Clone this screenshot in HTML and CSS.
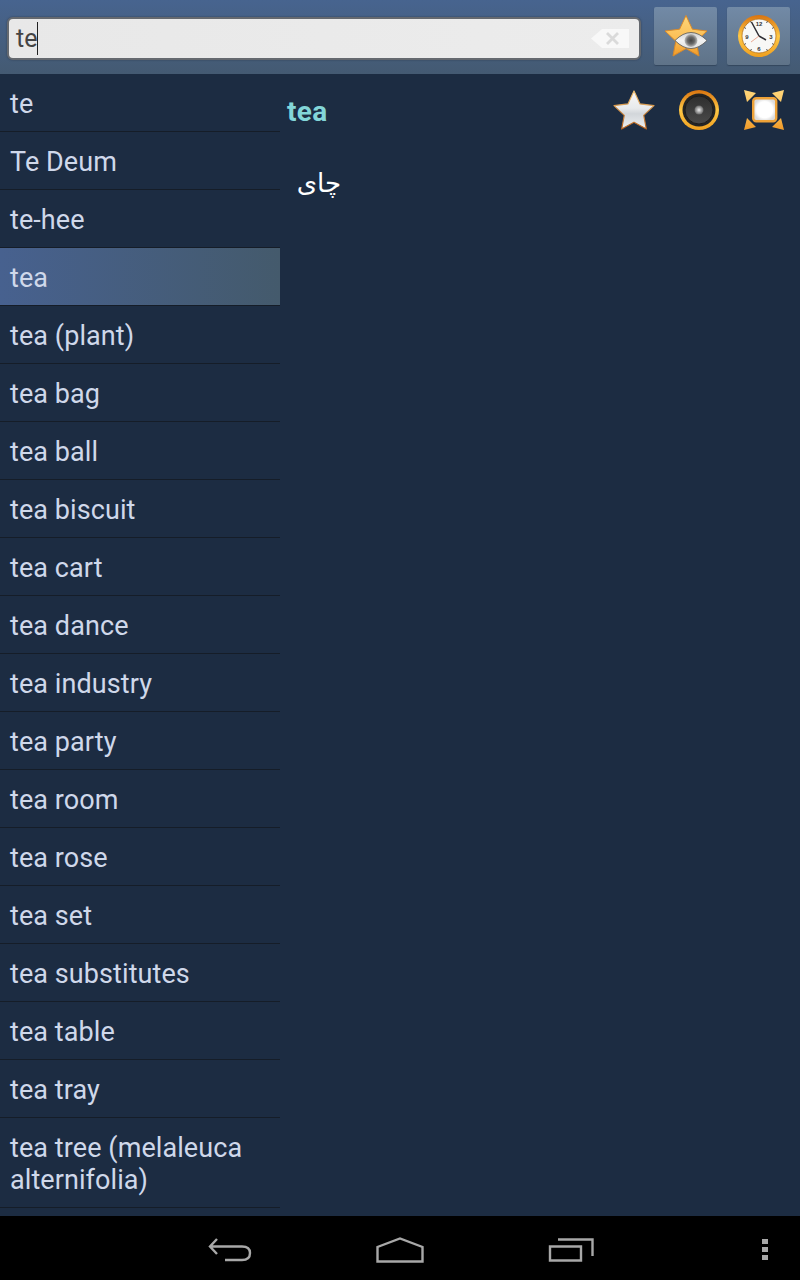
FILE: index.html
```html
<!DOCTYPE html>
<html lang="en">

<head>
    <meta charset="utf-8">
    <title>Dictionary</title>
    <link rel="stylesheet" href="styles.css">
</head>

<body>
    <svg class="defs" width="0" height="0">
        <defs>
            <linearGradient id="gold" x1="0" y1="0" x2="0" y2="1">
                <stop offset="0" stop-color="#ffd67a" />
                <stop offset="0.55" stop-color="#fbbf56" />
                <stop offset="1" stop-color="#f09a28" />
            </linearGradient>
            <linearGradient id="silver" x1="0" y1="0" x2="0" y2="1">
                <stop offset="0" stop-color="#f8f8f8" />
                <stop offset="0.45" stop-color="#e8eaec" />
                <stop offset="0.6" stop-color="#d2d6da" />
                <stop offset="1" stop-color="#eef0f2" />
            </linearGradient>
            <linearGradient id="edge" x1="0" y1="0" x2="0" y2="1">
                <stop offset="0" stop-color="#f0c070" />
                <stop offset="1" stop-color="#b8621c" />
            </linearGradient>
            <linearGradient id="ring" x1="0" y1="0" x2="0" y2="1">
                <stop offset="0" stop-color="#d9730f" />
                <stop offset="0.5" stop-color="#ffc845" />
                <stop offset="1" stop-color="#f0a020" />
            </linearGradient>
            <linearGradient id="cone" x1="0" y1="0" x2="0" y2="1">
                <stop offset="0" stop-color="#2e2e2e" />
                <stop offset="1" stop-color="#4a4a4a" />
            </linearGradient>
            <linearGradient id="white-eye" x1="0" y1="0" x2="0" y2="1">
                <stop offset="0" stop-color="#cfcfcf" />
                <stop offset="0.5" stop-color="#f2f2f2" />
                <stop offset="1" stop-color="#e2e2e2" />
            </linearGradient>
            <radialGradient id="iris">
                <stop offset="0" stop-color="#444" />
                <stop offset="0.55" stop-color="#6a6a6a" />
                <stop offset="1" stop-color="#bdbdbd" />
            </radialGradient>
            <radialGradient id="hub">
                <stop offset="0" stop-color="#eee" />
                <stop offset="0.5" stop-color="#aaa" />
                <stop offset="1" stop-color="#666" />
            </radialGradient>
            <radialGradient id="glow">
                <stop offset="0" stop-color="#fff" />
                <stop offset="0.7" stop-color="#fff" />
                <stop offset="1" stop-color="#dcdcdc" />
            </radialGradient>
        </defs>
    </svg>

    <header class="topbar">
        <div class="search">
            <span class="search-text">te</span><span class="caret"></span>
            <svg class="clear" width="38" height="19" viewBox="0 0 38 19">
                <path d="M0 9.5 L11 0 H38 V19 H11 Z" fill="#f8f8f8" />
                <path d="M16 4 L27 15 M27 4 L16 15" stroke="#dadada" stroke-width="2.8" fill="none" />
            </svg>
        </div>
        <button class="tool">
            <svg width="44" height="44" viewBox="0 0 44 44">
                <path d="M22 1.5 L28.4 15.2 L43 17 L32.2 27.2 L35 42 L22 34.6 L9 42 L11.8 27.2 L1 17 L15.6 15.2 Z"
                    fill="url(#gold)" stroke="#d98a2a" stroke-width="1" stroke-linejoin="round" />
                <path d="M11 26.5 Q27 10.5 43 26.5 Q27 42.5 11 26.5 Z" fill="url(#white-eye)" stroke="#555" stroke-width="0.8" />
                <circle cx="27" cy="26.5" r="6.5" fill="url(#iris)" />
            </svg>
        </button>
        <button class="tool">
            <svg width="44" height="44" viewBox="0 0 44 44">
                <circle cx="22" cy="22" r="21" fill="url(#ring)" />
                <circle cx="22" cy="22" r="17" fill="#f8f8f6" stroke="#b9741a" stroke-width="0.8" />
                <path d="M30.5 7.3 L29.5 9 M36.7 13.5 L35 14.5 M36.7 30.5 L35 29.5 M30.5 36.7 L29.5 35 M13.5 36.7 L14.5 35 M7.3 30.5 L9 29.5 M7.3 13.5 L9 14.5 M13.5 7.3 L14.5 9"
                    stroke="#555" stroke-width="1" />
                <text class="clock-num" x="22" y="11.5">12</text>
                <text class="clock-num" x="34" y="25">3</text>
                <text class="clock-num" x="22" y="37">6</text>
                <text class="clock-num" x="10" y="25">9</text>
                <path d="M22 22 L14.5 8 M22 22 L29 26" stroke="#2d2d33" stroke-width="1.5" fill="none" />
                <path d="M22 22 L14 28" stroke="#e9967a" stroke-width="0.8" fill="none" />
            </svg>
        </button>
    </header>

    <main class="content">
        <ul class="words">
            <li>te</li>
            <li>Te Deum</li>
            <li>te-hee</li>
            <li class="active">tea</li>
            <li>tea (plant)</li>
            <li>tea bag</li>
            <li>tea ball</li>
            <li>tea biscuit</li>
            <li>tea cart</li>
            <li>tea dance</li>
            <li>tea industry</li>
            <li>tea party</li>
            <li>tea room</li>
            <li>tea rose</li>
            <li>tea set</li>
            <li>tea substitutes</li>
            <li>tea table</li>
            <li>tea tray</li>
            <li>tea tree (melaleuca alternifolia)</li>
        </ul>

        <section class="entry">
            <div class="entry-head">
                <h1>tea</h1>
                <div class="entry-tools">
                    <svg width="42" height="40" viewBox="0 0 44 42">
                        <path d="M22 1 L28.4 14.6 L43 16.4 L32.2 26.6 L35 41 L22 33.8 L9 41 L11.8 26.6 L1 16.4 L15.6 14.6 Z"
                            fill="url(#silver)" stroke="url(#edge)" stroke-width="1.2" stroke-linejoin="round" />
                    </svg>
                    <svg width="40" height="40" viewBox="0 0 40 40">
                        <circle cx="20" cy="20" r="20" fill="url(#ring)" />
                        <circle cx="20" cy="20" r="16.5" fill="#242424" />
                        <circle cx="20" cy="20" r="14" fill="url(#cone)" stroke="#1c1c1c" stroke-width="1" />
                        <circle cx="20" cy="20" r="4.5" fill="url(#hub)" />
                    </svg>
                    <svg width="40" height="40" viewBox="0 0 40 40">
                        <path d="M0 0 L12 3 L3 12 Z M40 0 L28 3 L37 12 Z M0 40 L12 37 L3 28 Z M40 40 L28 37 L37 28 Z" fill="url(#gold)" />
                        <rect x="9.2" y="8.2" width="23" height="23" rx="3" fill="url(#glow)" stroke="#eea238" stroke-width="2.4" />
                    </svg>
                </div>
            </div>
            <p class="meaning" lang="fa" dir="rtl">چای</p>
        </section>
    </main>

    <nav class="navbar">
        <svg class="nav-back" width="44" height="26" viewBox="0 0 44 26">
            <path d="M9 2 L2 9.5 L9 17 M2 9.5 H34 Q42 9.5 42 16 Q42 23 34 23 H17" fill="none" stroke="#a8a8a8" stroke-width="2.4" />
        </svg>
        <svg class="nav-home" width="48" height="26" viewBox="0 0 48 26">
            <path d="M1.5 24.5 V10 L24 1.5 L46.5 10 V24.5 Z" fill="none" stroke="#a8a8a8" stroke-width="2.4" />
        </svg>
        <svg class="nav-recent" width="46" height="24" viewBox="0 0 46 24">
            <path d="M10 1.5 H44.5 V18 M2 8.5 H33 V22.5 H2 Z" fill="none" stroke="#a8a8a8" stroke-width="2.4" />
        </svg>
        <div class="nav-menu"><span></span><span></span><span></span></div>
    </nav>
</body>

</html>
```

FILE: styles.css
```css
:root {
    --bg-color: #1c2c42;
    --fg-color: #cfd8ea;
    --line-color: #151d28;
    --accent-color: #83d6d8;
}

* {
    margin: 0;
    padding: 0;
    box-sizing: border-box;
}

html,
body {
    height: 100%;
    overflow: hidden;
}

body {
    font-family: Roboto, sans-serif;
    background-color: var(--bg-color);
    color: var(--fg-color);
    display: flex;
    flex-direction: column;
}

.defs {
    position: absolute;
}

.topbar {
    height: 74px;
    flex-shrink: 0;
    display: flex;
    align-items: flex-start;
    padding: 7px 10px 0 7px;
    background: linear-gradient(#47648f, #445a72);
}

.search {
    width: 634px;
    height: 43px;
    margin: 10px 13px 0 0;
    padding-left: 7px;
    display: flex;
    align-items: center;
    position: relative;
    background: linear-gradient(90deg, #e8e8e8, #ececec);
    border: 2px solid #65696f;
    border-radius: 6px;
    box-shadow: 0 0 2px #2f3e52;
    color: #444;
    font-size: 25px;
}

.caret {
    width: 1px;
    height: 33px;
    background: #222;
}

.clear {
    position: absolute;
    right: 10px;
    top: 10px;
}

.tool {
    width: 63px;
    height: 58px;
    margin-right: 10px;
    border: none;
    border-radius: 2px;
    background: linear-gradient(#728aa6, #5f7388);
    box-shadow: 0 1px 1px #33465e;
    display: flex;
    align-items: center;
    justify-content: center;
}

.tool:last-child {
    margin-right: 0;
}

.clock-num {
    font-family: "Liberation Sans", sans-serif;
    font-size: 6px;
    font-weight: bold;
    text-anchor: middle;
    fill: #333;
}

.content {
    flex-grow: 1;
    min-height: 0;
    display: flex;
    overflow: hidden;
}

.words {
    width: 280px;
    flex-shrink: 0;
    list-style: none;
    font-size: 27px;
    letter-spacing: 0.08px;
    line-height: 32px;
}

.words li {
    padding: 14px 10px 11px;
    border-bottom: 1px solid var(--line-color);
}

.words .active {
    background: linear-gradient(90deg, #47618f, #445a6c);
}

.entry {
    flex-grow: 1;
    min-width: 0;
    padding: 0 16px 0 7px;
}

.entry-head {
    height: 72px;
    display: flex;
    align-items: center;
    justify-content: space-between;
}

.entry-head h1 {
    margin-top: 2px;
    font-size: 28px;
    font-weight: bold;
    letter-spacing: 0.3px;
    color: var(--accent-color);
}

.entry-tools {
    display: flex;
    align-items: center;
    gap: 24px;
}

.entry-tools svg:last-child {
    margin-left: 1px;
}

.meaning {
    margin-top: 22px;
    width: 54px;
    font-family: "DejaVu Sans", sans-serif;
    font-size: 26px;
    color: #fff;
}

.navbar {
    height: 64px;
    flex-shrink: 0;
    background: #000;
    display: flex;
    align-items: center;
    padding: 3px 0 0 208px;
}

.nav-home {
    margin-left: 124px;
}

.nav-recent {
    margin-left: 124px;
}

.nav-menu {
    margin-left: 168px;
    display: flex;
    flex-direction: column;
    gap: 3px;
}

.nav-menu span {
    width: 6px;
    height: 5px;
    background: #a8a8a8;
}
```
